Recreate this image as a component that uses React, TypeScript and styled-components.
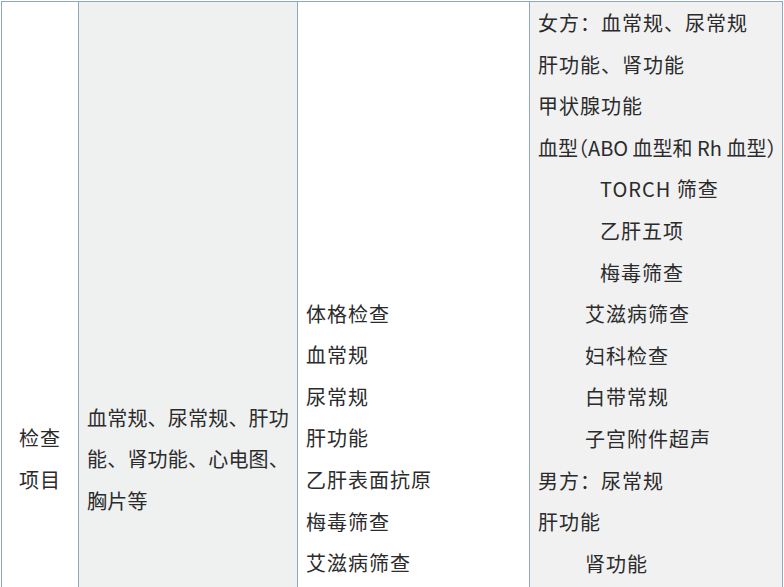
import styled, { createGlobalStyle } from 'styled-components';

const GlobalStyle = createGlobalStyle`
  html, body {
    margin: 0;
    padding: 0;
    background: #fff;
    overflow: hidden;
  }
  body {
    font-family: "Noto Sans CJK SC", "Noto Sans", sans-serif;
    color: #2b2b2b;
  }
`;

type Shade = 'white' | 'gray' | 'light';

const shades: Record<Shade, string> = {
  white: '#ffffff',
  gray: '#eff0f0',
  light: '#f1f1f2',
};

const Page = styled.div`
  padding: 1px 0 0 1px;
`;

const Table = styled.table`
  width: 781px;
  table-layout: fixed;
  border-collapse: collapse;
  border: 1px solid #84b6b3;
`;

// the row runs on below the visible frame, so its full height is fixed here
const Row = styled.tr`
  height: 915px;
`;

const Cell = styled.td<{ $shade: Shade; $center?: boolean; $width: number; $lift?: number }>`
  width: ${(p) => p.$width}px;
  box-sizing: border-box;
  background: ${(p) => shades[p.$shade]};
  border: 1px solid #8caab8;
  padding: 0 0 ${(p) => p.$lift ?? 0}px ${(p) => (p.$center ? 0 : 8)}px;
  text-align: ${(p) => (p.$center ? 'center' : 'left')};
  vertical-align: ${(p) => (p.$shade === 'light' ? 'top' : 'middle')};
  font-size: 20px;
  line-height: 41.6px;
`;

const Line = styled.div<{ $indent?: number; $tight?: boolean }>`
  padding-left: ${(p) => p.$indent ?? 0}px;
  letter-spacing: ${(p) => (p.$tight ? 0 : 1)}px;
  white-space: nowrap;
  font-feature-settings: ${(p) => (p.$tight ? '"halt"' : 'normal')};
`;

const Paragraph = styled.div`
  letter-spacing: 0.2px;
  padding-right: 6px;
`;

const middle = ['体格检查', '血常规', '尿常规', '肝功能', '乙肝表面抗原', '梅毒筛查', '艾滋病筛查'];

const right: { text: string; indent?: number; tight?: boolean }[] = [
  { text: '女方：血常规、尿常规' },
  { text: '肝功能、肾功能' },
  { text: '甲状腺功能' },
  { text: '血型（ABO 血型和 Rh 血型）', tight: true },
  { text: 'TORCH 筛查', indent: 62 },
  { text: '乙肝五项', indent: 62 },
  { text: '梅毒筛查', indent: 62 },
  { text: '艾滋病筛查', indent: 47 },
  { text: '妇科检查', indent: 47 },
  { text: '白带常规', indent: 47 },
  { text: '子宫附件超声', indent: 47 },
  { text: '男方：尿常规' },
  { text: '肝功能' },
  { text: '肾功能', indent: 47 },
];

export default function App() {
  return (
    <>
      <GlobalStyle />
      <Page>
        <Table>
          <tbody>
            <Row>
              <Cell $shade="white" $center $width={77}>
                <Line>检查</Line>
                <Line>项目</Line>
              </Cell>
              <Cell $shade="gray" $width={219}>
                <Paragraph>血常规、尿常规、肝功能、肾功能、心电图、胸片等</Paragraph>
              </Cell>
              <Cell $shade="white" $width={232} $lift={41.6}>
                {middle.map((t, i) => (
                  <Line key={i}>{t}</Line>
                ))}
              </Cell>
              <Cell $shade="light" $width={253}>
                {right.map((r, i) => (
                  <Line key={i} $indent={r.indent} $tight={r.tight}>
                    {r.text}
                  </Line>
                ))}
              </Cell>
            </Row>
          </tbody>
        </Table>
      </Page>
    </>
  );
}
